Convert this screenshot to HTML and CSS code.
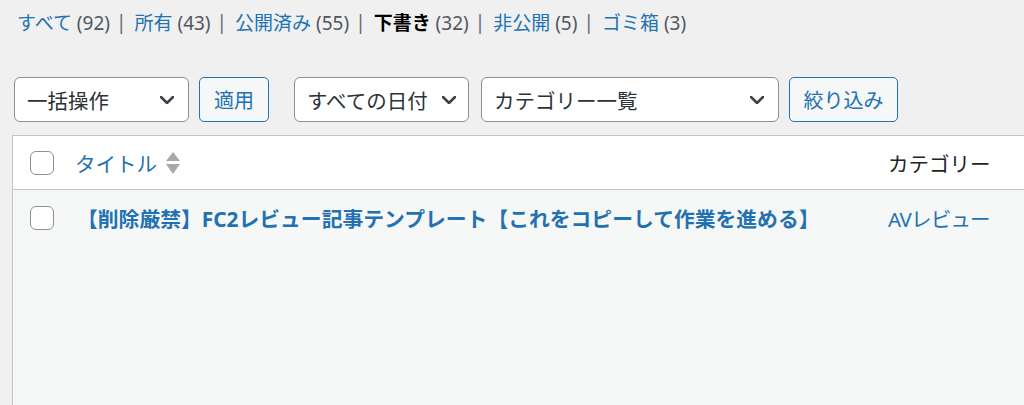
FILE: index.html
```html
<!DOCTYPE html>
<html lang="ja">
<head>
<meta charset="utf-8">
<title>投稿一覧</title>
<link rel="stylesheet" href="styles.css">
</head>
<body>
<div class="page">
  <ul class="subsubsub">
    <li><a href="#">すべて <span class="count">(92)</span></a><span class="sep">|</span></li>
    <li><a href="#">所有 <span class="count">(43)</span></a><span class="sep">|</span></li>
    <li><a href="#">公開済み <span class="count">(55)</span></a><span class="sep">|</span></li>
    <li><a href="#" class="current">下書き <span class="count">(32)</span></a><span class="sep">|</span></li>
    <li><a href="#">非公開 <span class="count">(5)</span></a><span class="sep">|</span></li>
    <li><a href="#">ゴミ箱 <span class="count">(3)</span></a></li>
  </ul>

  <div class="tablenav">
    <div class="select select-bulk"><span>一括操作</span><svg class="chev" viewBox="0 0 14 8"><path d="M1 1 L7 7 L13 1" /></svg></div>
    <div class="button btn-apply">適用</div>
    <div class="select select-date"><span>すべての日付</span><svg class="chev" viewBox="0 0 14 8"><path d="M1 1 L7 7 L13 1" /></svg></div>
    <div class="select select-cat"><span>カテゴリー一覧</span><svg class="chev" viewBox="0 0 14 8"><path d="M1 1 L7 7 L13 1" /></svg></div>
    <div class="button btn-filter">絞り込み</div>
  </div>

  <div class="table">
    <div class="row head">
      <div class="cell check"><span class="checkbox"></span></div>
      <div class="cell title-col">
        <a href="#" class="sort-link">タイトル</a>
        <svg class="sort" viewBox="0 0 14 22"><path d="M7 0 L14 9 L0 9 Z" /><path d="M0 12 L14 12 L7 22 Z" /></svg>
      </div>
      <div class="cell cat-col head-cat">カテゴリー</div>
    </div>
    <div class="row body-row">
      <div class="cell check"><span class="checkbox"></span></div>
      <div class="cell title-col"><a href="#" class="post-title">【削除厳禁】FC2レビュー記事テンプレート【これをコピーして作業を進める】</a></div>
      <div class="cell cat-col"><a href="#" class="cat-link">AVレビュー</a></div>
    </div>
  </div>
</div>
</body>
</html>
```

FILE: styles.css
```css
html, body {
  margin: 0;
  padding: 0;
  height: 100%;
}

body {
  background: #f0f0f1;
  font-family: "Noto Sans", "Noto Sans CJK JP", sans-serif;
  color: #3c434a;
  overflow: hidden;
}

a {
  color: #2271b1;
  text-decoration: none;
}

.page {
  height: 100%;
  display: flex;
  flex-direction: column;
  padding-top: 8px;
  box-sizing: border-box;
}

.subsubsub {
  list-style: none;
  margin: 0 0 0 17px;
  padding: 0;
  display: flex;
  align-items: center;
  height: 28px;
  font-size: 19px;
  color: #50575e;
  white-space: nowrap;
}

.subsubsub li {
  display: flex;
  align-items: center;
}

.subsubsub .count {
  color: #50575e;
}

.subsubsub .current {
  color: #000;
  font-weight: 700;
}

.subsubsub .current .count {
  font-weight: 400;
}

.subsubsub .sep {
  color: #646970;
  margin: 0 8px 0 6px;
}

.tablenav {
  display: flex;
  align-items: center;
  margin: 41px 0 0 14px;
  height: 45px;
}

.select {
  box-sizing: border-box;
  height: 45px;
  background: #fff;
  border: 1px solid #8c8f94;
  border-radius: 6px;
  display: flex;
  align-items: center;
  justify-content: space-between;
  padding: 0 14px 0 12px;
  font-size: 20.5px;
  color: #2c3338;
}

.chev {
  width: 14px;
  height: 8px;
  fill: none;
  stroke: #3c434a;
  stroke-width: 2.6;
  stroke-linecap: round;
  stroke-linejoin: round;
}

.select-bulk { width: 175px; }
.select-date { width: 175px; margin-left: 25px; padding-right: 12px; }
.select-cat { width: 298px; margin-left: 12px; }

.button {
  box-sizing: border-box;
  height: 45px;
  display: flex;
  align-items: center;
  justify-content: center;
  background: #f6f7f7;
  border: 1px solid #2271b1;
  border-radius: 5px;
  color: #2271b1;
  font-size: 20px;
}

.btn-apply { width: 70px; margin-left: 10px; }
.btn-filter { width: 109px; margin-left: 10px; }

.table {
  flex: 1;
  margin: 13px 0 0 12px;
  border-left: 1px solid #c3c4c7;
  border-top: 1px solid #c3c4c7;
  background: #f6f7f7;
  box-sizing: border-box;
  overflow: hidden;
}

.row {
  display: grid;
  grid-template-columns: 52px 809px 1fr;
  align-items: center;
}

.row.head {
  height: 54px;
  background: #fff;
  border-bottom: 1px solid #c3c4c7;
  box-sizing: border-box;
}

.row.body-row {
  height: 56px;
}

.cell {
  display: flex;
  align-items: center;
  min-width: 0;
}

.check {
  padding-left: 17px;
}

.checkbox {
  box-sizing: border-box;
  width: 24px;
  height: 24px;
  border: 1px solid #8c8f94;
  border-radius: 6px;
  background: #fff;
}

.title-col {
  padding-left: 10px;
  font-size: 20.5px;
}

.sort-link {
  color: #2271b1;
}

.sort {
  width: 14px;
  height: 22px;
  margin-left: 9px;
  fill: #a7aaad;
}

.post-title {
  font-weight: 700;
  color: #2271b1;
  font-size: 20.8px;
  margin-left: 2px;
  white-space: nowrap;
}

.cat-col {
  padding-left: 14px;
  font-size: 20.5px;
  white-space: nowrap;
}

.head-cat {
  color: #1d2327;
}

.cat-link {
  color: #2271b1;
  letter-spacing: -0.8px;
}
```
